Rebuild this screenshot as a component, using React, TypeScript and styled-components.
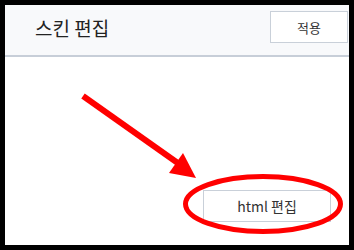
import React from "react";
import styled, { createGlobalStyle } from "styled-components";

const GlobalStyle = createGlobalStyle`
  html, body {
    margin: 0;
    padding: 0;
    background: #000;
  }
  * {
    box-sizing: border-box;
  }
`;

export default function App() {
  return (
    <>
      <GlobalStyle />
      <Frame>
        <Header>
          <Title>스킨 편집</Title>
          <ApplyButton>적용</ApplyButton>
        </Header>
        <Body>
          <EditButton>html 편집</EditButton>
        </Body>
        <Annotation viewBox="0 0 354 250" aria-hidden="true">
          <line x1="83" y1="96" x2="182" y2="166" stroke="#ff0000" strokeWidth="6" />
          <polygon points="196,178 183,153 169,173" fill="#ff0000" />
          <ellipse cx="263" cy="204" rx="77.5" ry="27.5" fill="none" stroke="#ff0000" strokeWidth="5" />
        </Annotation>
      </Frame>
    </>
  );
}

const Frame = styled.div`
  position: relative;
  width: 354px;
  height: 250px;
  border: 5px solid #000;
  background: #fff;
  display: flex;
  flex-direction: column;
  font-family: "Noto Sans CJK KR", "Noto Sans", sans-serif;
`;

const Header = styled.div`
  height: 52px;
  display: flex;
  align-items: center;
  justify-content: space-between;
  padding: 6px 1px 12px 30px;
  background: #f8f9fb;
  border-bottom: 2px solid #c7ced8;
`;

const Title = styled.h1`
  margin: 0;
  font-size: 19px;
  font-weight: 400;
  color: #222;
`;

const ApplyButton = styled.button`
  width: 78px;
  height: 32px;
  background: #fff;
  border: 1px solid #c9d0d9;
  font-family: inherit;
  font-size: 13px;
  color: #333;
  padding: 0;
`;

const Body = styled.div`
  flex: 1;
  display: flex;
  justify-content: flex-end;
  align-items: flex-end;
  padding: 0 18px 23px 0;
`;

const EditButton = styled.button`
  width: 128px;
  height: 32px;
  background: #fff;
  border: 1px solid #c9d0d9;
  font-family: inherit;
  font-size: 14px;
  color: #333;
  padding: 0;
`;

const Annotation = styled.svg`
  position: absolute;
  top: -5px;
  left: -5px;
  width: 354px;
  height: 250px;
  pointer-events: none;
`;
